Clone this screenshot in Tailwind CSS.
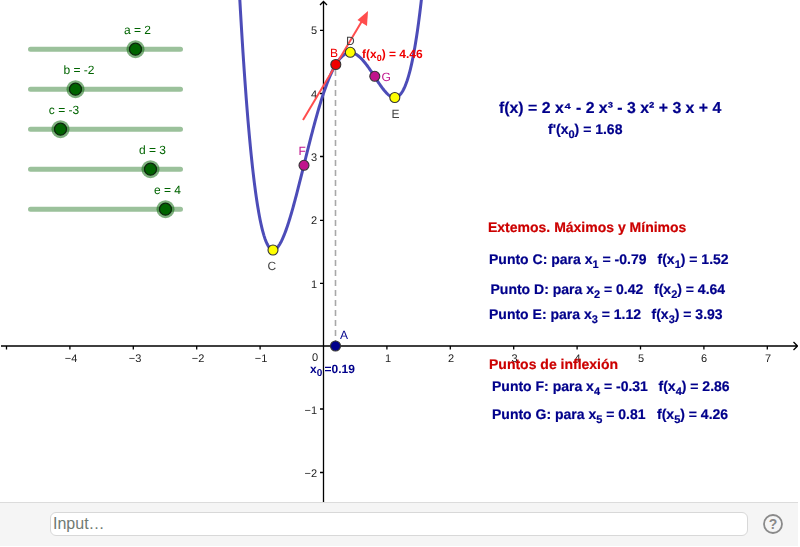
<!DOCTYPE html>
<html lang="en">
<head>
  <meta charset="UTF-8" />
  <title>GeoGebra - f(x)</title>
  <script src="https://cdn.jsdelivr.net/npm/@tailwindcss/browser@4"></script>
</head>
<body class="bg-white overflow-hidden font-['Liberation_Sans',sans-serif]">
  <div class="flex flex-col w-[798px] h-[546px]">
    <!-- graphics view -->
    <svg class="block w-[798px] h-[502px] shrink-0 will-change-transform [text-rendering:geometricPrecision]" viewBox="0 0 798 502">
      <!-- axes -->
      <g class="stroke-black" fill="none" stroke-width="1.3">
        <path d="M1 346H797.5M793.5 342L797.5 346L793.5 350" />
        <path d="M323.5 502V1.5M320 5L323.5 1.5L327 5" />
        <path d="M6.5 346v3.5M69.9 346v3.5M133.3 346v3.5M196.7 346v3.5M260.1 346v3.5M386.9 346v3.5M450.3 346v3.5M513.7 346v3.5M577.1 346v3.5M640.5 346v3.5M703.9 346v3.5M767.3 346v3.5" />
        <path d="M320 30.3h3.5M320 93.5h3.5M320 156.5h3.5M320 220.3h3.5M320 283.3h3.5M320 409h3.5M320 472.5h3.5" />
      </g>
      <g class="fill-[#222] text-[11px]" text-anchor="middle">
        <text x="71" y="362">−4</text>
        <text x="135" y="362">−3</text>
        <text x="198" y="362">−2</text>
        <text x="261" y="362">−1</text>
        <text x="315" y="361">0</text>
        <text x="388" y="362">1</text>
        <text x="451" y="362">2</text>
        <text x="514.5" y="362">3</text>
        <text x="577.5" y="362">4</text>
        <text x="641" y="362">5</text>
        <text x="704" y="362">6</text>
        <text x="768" y="362">7</text>
      </g>
      <g class="fill-[#222] text-[11px]" text-anchor="end">
        <text x="317" y="34">5</text>
        <text x="317" y="98">4</text>
        <text x="317" y="161">3</text>
        <text x="317" y="224">2</text>
        <text x="317" y="288">1</text>
        <text x="317" y="414">−1</text>
        <text x="317" y="477">−2</text>
      </g>

      <!-- sliders -->
      <g class="stroke-[#9bc19b]" stroke-width="5" stroke-linecap="round">
        <path d="M30.5 49.2H180.5M30.5 89.2H180.5M30.5 129.2H180.5M30.5 169.2H180.5M30.5 209.2H180.5" />
      </g>
      <g class="fill-[#006400]/50">
        <circle cx="135.5" cy="49.2" r="9" />
        <circle cx="75.5" cy="89.2" r="9" />
        <circle cx="60.5" cy="129.2" r="9" />
        <circle cx="150.5" cy="169.2" r="9" />
        <circle cx="165.5" cy="209.2" r="9" />
      </g>
      <g class="fill-[#006400] stroke-[#0c260c]" stroke-width="1.2">
        <circle cx="135.5" cy="49.2" r="6" />
        <circle cx="75.5" cy="89.2" r="6" />
        <circle cx="60.5" cy="129.2" r="6" />
        <circle cx="150.5" cy="169.2" r="6" />
        <circle cx="165.5" cy="209.2" r="6" />
      </g>
      <g class="fill-[#006400] text-[12px]" text-anchor="middle">
        <text x="137.5" y="34">a = 2</text>
        <text x="79" y="74">b = -2</text>
        <text x="64" y="114">c = -3</text>
        <text x="152.5" y="154">d = 3</text>
        <text x="167.5" y="194">e = 4</text>
      </g>

      <!-- function -->
      <path id="curve" class="stroke-[#4c4cb8]" fill="none" stroke-width="3" />

      <!-- tangent and x0 guide -->
      <path d="M335.5 346V65" class="stroke-[#a8a8a8]" fill="none" stroke-width="1.6" stroke-dasharray="6 4" />
      <path d="M303 120L362 21" class="stroke-[#ff4d4d]" fill="none" stroke-width="2" />
      <path d="M368 11L367 26L357.5 20Z" class="fill-[#ff4d4d]" />

      <!-- points -->
      <g class="stroke-[#333]" stroke-width="1.1">
        <circle cx="335.5" cy="346" r="5" class="fill-[#00008b]" />
        <circle cx="335.8" cy="64.5" r="5" class="fill-[#f00000]" />
        <circle cx="273" cy="250" r="5" class="fill-[#ffff00]" />
        <circle cx="350.3" cy="52.3" r="5" class="fill-[#ffff00]" />
        <circle cx="394.8" cy="97.5" r="5" class="fill-[#ffff00]" />
        <circle cx="304" cy="165.3" r="5" class="fill-[#c0148c]" />
        <circle cx="374.8" cy="76.3" r="5" class="fill-[#c0148c]" />
      </g>
      <g class="text-[12px]">
        <text x="330" y="56.5" class="fill-[#f00000]">B</text>
        <text x="346" y="45" class="fill-[#444]">D</text>
        <text x="267.5" y="270" class="fill-[#444]">C</text>
        <text x="391.5" y="118" class="fill-[#444]">E</text>
        <text x="298.5" y="155" class="fill-[#c0148c]">F</text>
        <text x="381.5" y="81" class="fill-[#c0148c]">G</text>
        <text x="340" y="339" class="fill-[#00008b]">A</text>
      </g>
      <text x="362" y="58" class="fill-[#f00000] text-[12px] font-bold">f(x<tspan dy="3" class="text-[9px]">0</tspan><tspan dy="-3">) = 4.46</tspan></text>
      <text x="310" y="373" class="fill-[#00008b] text-[12px] font-bold">x<tspan dy="3" class="text-[10px]">0</tspan></text>
      <text x="324.5" y="373" class="fill-[#00008b] text-[12px] font-bold">=0.19</text>

      <!-- formula and results -->
      <g class="fill-[#00008b] stroke-[#00008b] [stroke-width:0.2px] font-bold">
        <text x="499" y="113" class="text-[15.85px]">f(x) = 2 x⁴ - 2 x³ - 3 x² + 3 x + 4</text>
        <text x="548" y="134" class="text-[14px]">f'(x<tspan dy="4" class="text-[11px]">0</tspan><tspan dy="-4">) = 1.68</tspan></text>

        <g class="text-[14px]">
          <text x="489" y="264">Punto C: para x<tspan dy="4" class="text-[11px]">1</tspan><tspan dy="-4"> = -0.79</tspan></text>
          <text x="657.5" y="264">f(x<tspan dy="4" class="text-[11px]">1</tspan><tspan dy="-4">) = 1.52</tspan></text>
          <text x="490.5" y="294">Punto D: para x<tspan dy="4" class="text-[11px]">2</tspan><tspan dy="-4"> = 0.42</tspan></text>
          <text x="654" y="294">f(x<tspan dy="4" class="text-[11px]">2</tspan><tspan dy="-4">) = 4.64</tspan></text>
          <text x="489" y="319">Punto E: para x<tspan dy="4" class="text-[11px]">3</tspan><tspan dy="-4"> = 1.12</tspan></text>
          <text x="651.5" y="319">f(x<tspan dy="4" class="text-[11px]">3</tspan><tspan dy="-4">) = 3.93</tspan></text>
          <text x="492" y="391">Punto F: para x<tspan dy="4" class="text-[11px]">4</tspan><tspan dy="-4"> = -0.31</tspan></text>
          <text x="658.5" y="391">f(x<tspan dy="4" class="text-[11px]">4</tspan><tspan dy="-4">) = 2.86</tspan></text>
          <text x="492" y="419">Punto G: para x<tspan dy="4" class="text-[11px]">5</tspan><tspan dy="-4"> = 0.81</tspan></text>
          <text x="657" y="419">f(x<tspan dy="4" class="text-[11px]">5</tspan><tspan dy="-4">) = 4.26</tspan></text>
        </g>
      </g>
      <g class="fill-[#cc0000] stroke-[#cc0000] [stroke-width:0.2px] font-bold text-[14px]">
        <text x="488" y="232">Extemos. Máximos y Mínimos</text>
        <text x="489" y="369">Puntos de inflexión</text>
      </g>
    </svg>

    <!-- input bar -->
    <div class="flex items-start pt-[9px] h-[44px] bg-[#f5f5f5] border-t border-[#dcdcdc]">
      <input type="text" placeholder="Input…" class="ml-[50px] w-[698px] h-[24px] px-[2px] bg-white border border-[#d8d8d8] rounded-md text-[16px] placeholder:text-[#6f7a73] outline-none" />
      <svg class="ml-[15px] mt-[2px] w-[20px] h-[20px]" viewBox="0 0 20 20">
        <circle cx="10" cy="10" r="9" class="stroke-[#8a8a8a]" fill="none" stroke-width="1.8" />
        <text x="10" y="15" text-anchor="middle" class="fill-[#8a8a8a] text-[14px] font-bold">?</text>
      </svg>
    </div>
  </div>

  <script>
    // f(x) = 2x^4 - 2x^3 - 3x^2 + 3x + 4 in screen coordinates
    const f = x => 2*x**4 - 2*x**3 - 3*x**2 + 3*x + 4;
    let d = '';
    for (let x = -1.35; x <= 1.65; x += 0.01) {
      const px = 323.5 + x * 63.4;
      const py = 346 - f(x) * 63.15;
      d += (d ? 'L' : 'M') + px.toFixed(2) + ' ' + py.toFixed(2);
    }
    document.getElementById('curve').setAttribute('d', d);
  </script>
</body>
</html>
